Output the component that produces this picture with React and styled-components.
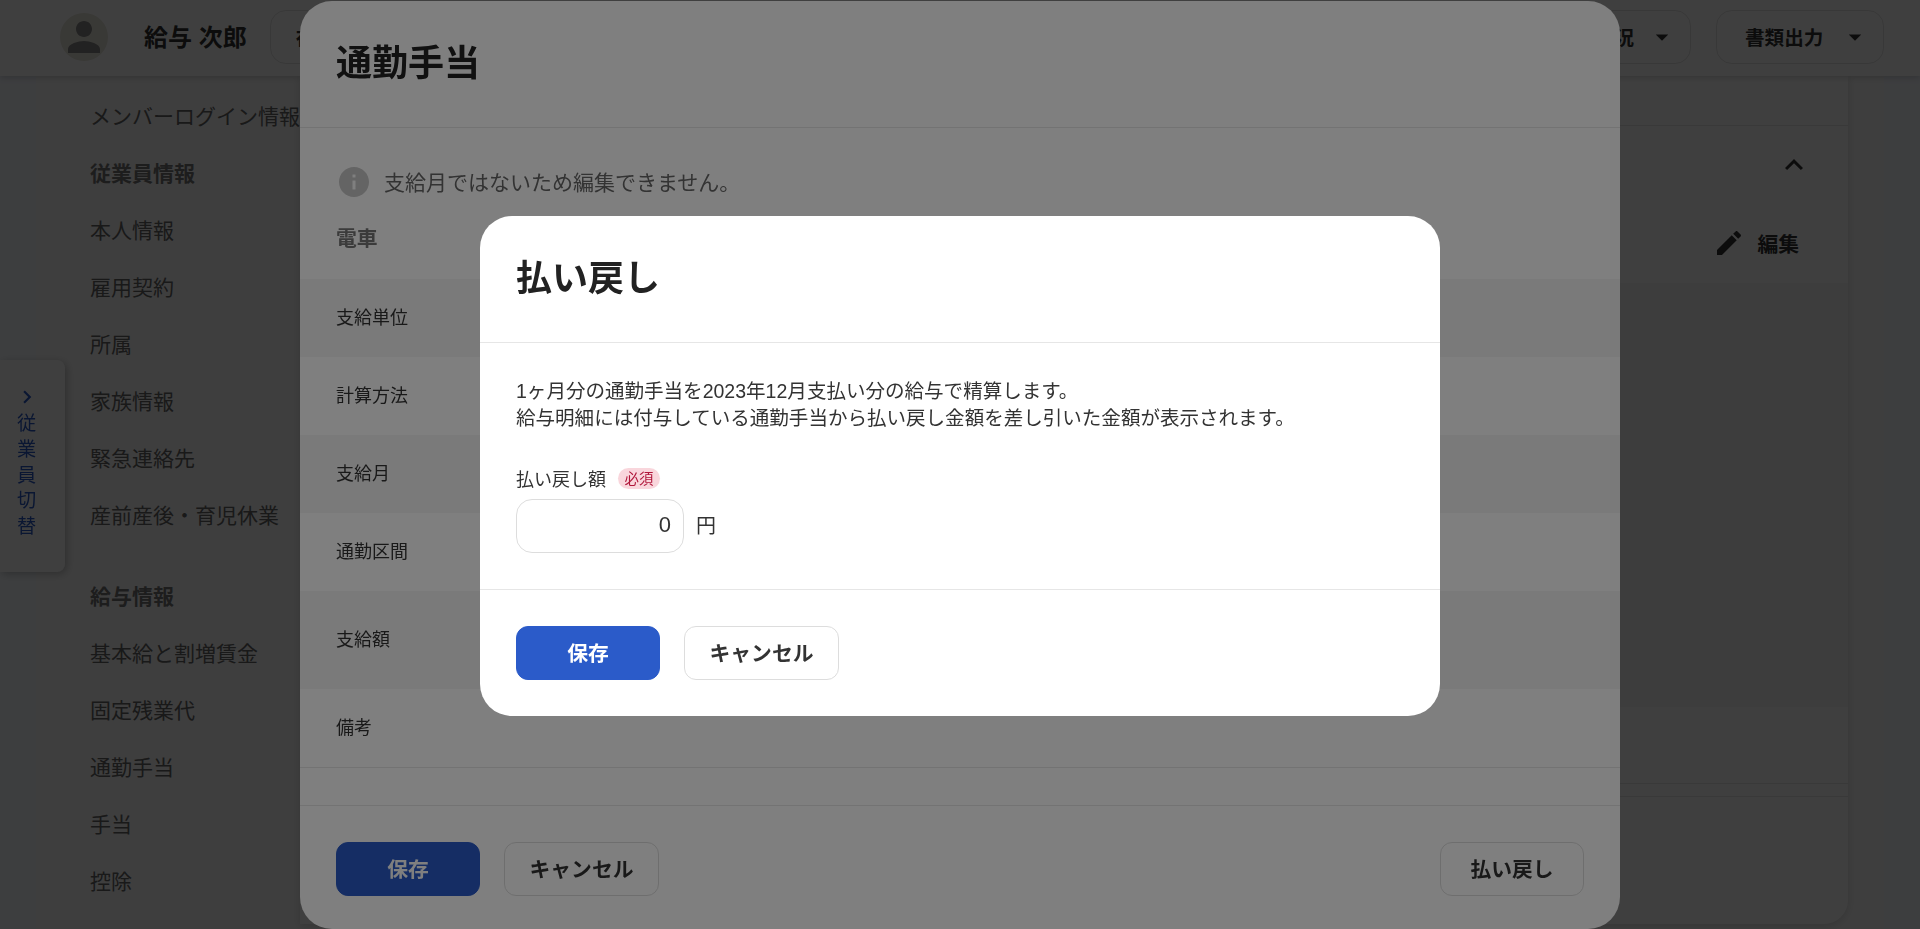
import React from 'react';
import styled, { createGlobalStyle } from 'styled-components';

const GlobalStyle = createGlobalStyle`
  html, body {
    margin: 0;
    padding: 0;
    height: 100%;
    overflow: hidden;
    background: #f5f8ff;
    color: #333;
    font-family: "Liberation Sans", "Noto Sans CJK JP", sans-serif;
  }
  * {
    box-sizing: border-box;
  }
`;

const Page = styled.div`
  height: 929px;
  display: flex;
  flex-direction: column;
  overflow: hidden;
`;

const Header = styled.header`
  height: 76px;
  flex: none;
  display: flex;
  align-items: center;
  padding: 0 36px 3px 60px;
  background: #fff;
  box-shadow: 0 2px 6px rgba(0, 0, 0, 0.16);
  position: relative;
  z-index: 2;
`;

const Avatar = styled.svg`
  width: 48px;
  height: 48px;
  flex: none;
  margin-right: 36px;
  border-radius: 50%;
  background: #e6e4da;
  fill: #888;
`;

const EmployeeName = styled.div`
  font-size: 24px;
  font-weight: 700;
  color: #333;
  margin: 0 23px 3px 0;
  white-space: nowrap;
`;

const HeaderButton = styled.button`
  height: 54px;
  display: flex;
  align-items: center;
  justify-content: ${(p) => (p.$end ? 'flex-end' : 'space-between')};
  gap: 13px;
  width: ${(p) => p.$width}px;
  padding: 0 13px 0 ${(p) => p.$pad}px;
  border: 1px solid #e2e2e2;
  border-radius: 16px;
  background: #fff;
  color: #333;
  font: inherit;
  font-size: 19.6px;
  font-weight: 700;
  white-space: nowrap;
  overflow: hidden;
`;

const HeaderSpacer = styled.div`
  flex: 1;
`;

const HeaderActions = styled.div`
  display: flex;
  gap: 25px;
`;

const Caret = styled.svg`
  width: 30px;
  height: 30px;
  flex: none;
  fill: #333;
`;

const Main = styled.main`
  flex: 1;
  min-height: 0;
  margin: 0 36px;
  display: flex;
  background: #fafafa;
`;

const SideNav = styled.nav`
  width: 264px;
  flex: none;
  padding: 10px 0 0 54px;
`;

const NavTitle = styled.div`
  height: 57px;
  display: flex;
  align-items: center;
  font-size: 21px;
  font-weight: 700;
  color: #777;
  white-space: nowrap;
  margin-top: ${(p) => (p.$spaced ? '24px' : '0')};
`;

const NavItem = styled.div`
  height: 57px;
  display: flex;
  align-items: center;
  font-size: 21px;
  color: #666;
  white-space: nowrap;
`;

const Card = styled.section`
  flex: 1;
  margin: 0 36px 5px 0;
  border-radius: 0 0 24px 0;
  background: #fff;
  box-shadow: 0 2px 8px rgba(0, 0, 0, 0.14);
  display: flex;
  flex-direction: column;
`;

const CardTabs = styled.div`
  height: 50px;
  flex: none;
  border-bottom: 1px solid #e6e6e6;
`;

const CardToolbar = styled.div`
  height: 157px;
  flex: none;
  display: flex;
  flex-direction: column;
  align-items: flex-end;
  padding: 21px 36px 0 0;
`;

const Chevron = styled.svg`
  width: 36px;
  height: 36px;
  fill: #333;
`;

const EditButton = styled.div`
  display: flex;
  align-items: center;
  gap: 12px;
  margin: 44px 13px 0 0;
  font-size: 20.8px;
  font-weight: 700;
  color: #333;
`;

const EditIcon = styled.svg`
  width: 32px;
  height: 32px;
  fill: #333;
`;

const CardTable = styled.div`
  height: 424px;
  flex: none;
  background: #f7f7f7;
`;

const CardGap = styled.div`
  height: 77px;
  flex: none;
  border-bottom: 1px solid #e6e6e6;
`;

const CardStrip = styled.div`
  height: 13px;
  flex: none;
  border-bottom: 1px solid #e6e6e6;
`;

const SideTab = styled.div`
  position: fixed;
  left: 0;
  top: 360px;
  width: 65px;
  height: 212px;
  z-index: 3;
  display: flex;
  flex-direction: column;
  align-items: center;
  padding: 24px 12px 0 0;
  background: #fff;
  border-radius: 0 8px 8px 0;
  box-shadow: 2px 2px 8px rgba(0, 0, 0, 0.25);
  color: #2b5bc9;
  font-size: 19.2px;
  line-height: 25.8px;
`;

const TabChevron = styled.svg`
  width: 26px;
  height: 26px;
  fill: #2b5bc9;
  margin-bottom: 1px;
  flex: none;
`;

const Overlay = styled.div`
  position: fixed;
  inset: 0;
  z-index: ${(p) => p.$z};
  display: flex;
  justify-content: center;
  align-items: flex-start;
  padding-top: ${(p) => p.$top}px;
  background: rgba(0, 0, 0, 0.5);
`;

const Modal = styled.div`
  width: ${(p) => p.$width}px;
  height: ${(p) => p.$height}px;
  flex: none;
  display: flex;
  flex-direction: column;
  background: #fff;
  border-radius: 32px;
  overflow: hidden;
`;

const ModalHeader = styled.div`
  height: ${(p) => p.$height}px;
  flex: none;
  display: flex;
  align-items: ${(p) => (p.$alignTop ? 'flex-start' : 'center')};
  padding: ${(p) => (p.$alignTop ? '38px 36px 0' : '0 36px')};
  border-bottom: 1px solid #e6e6e6;
`;

const ModalTitle = styled.h2`
  margin: 0;
  font-size: 36px;
  line-height: 50px;
  font-weight: 700;
  color: #222;
`;

const Notice = styled.div`
  height: 30px;
  flex: none;
  margin: 39px 36px 0;
  display: flex;
  align-items: center;
  gap: 12px;
  font-size: 21px;
  color: #666;
`;

const NoticeText = styled.span`
  margin-bottom: 2px;
`;

const NoticeIcon = styled.svg`
  width: 36px;
  height: 36px;
  flex: none;
  fill: #c8c8c8;
`;

const SectionTitle = styled.div`
  height: 82px;
  flex: none;
  display: flex;
  align-items: center;
  padding: 0 36px 2px;
  font-size: 20.8px;
  font-weight: 700;
  color: #777;
`;

const Row = styled.div`
  height: ${(p) => p.$height}px;
  flex: none;
  display: flex;
  align-items: center;
  padding: 0 36px 5px;
  background: ${(p) => (p.$shaded ? '#f5f5f5' : '#fff')};
  border-bottom: ${(p) => (p.$last ? '1px solid #e6e6e6' : '0')};
  font-size: 18px;
  color: #333;
`;

const ModalFooter = styled.div`
  display: flex;
  justify-content: space-between;
  align-items: flex-start;
  gap: 24px;
  margin-top: ${(p) => p.$gap}px;
  padding: 36px 36px 0;
  border-top: 1px solid #e6e6e6;
`;

const ButtonGroup = styled.div`
  display: flex;
  gap: 24px;
`;

const Button = styled.button`
  height: 54px;
  width: ${(p) => p.$width}px;
  padding: 0 0 2px;
  border: 1px solid ${(p) => (p.$primary ? '#2b5bc9' : '#ddd')};
  border-radius: 12px;
  background: ${(p) => (p.$primary ? '#2b5bc9' : '#fff')};
  color: ${(p) => (p.$primary ? '#fff' : '#333')};
  font: inherit;
  font-size: 20.8px;
  font-weight: 700;
  white-space: nowrap;
`;

const ModalBody = styled.div`
  padding: 35px 36px 0;
  height: 246px;
  flex: none;
`;

const Description = styled.p`
  margin: 0;
  font-size: 19.55px;
  line-height: 27px;
  color: #333;
`;

const FieldLabel = styled.div`
  margin-top: 36px;
  height: 21px;
  display: flex;
  align-items: center;
  gap: 12px;
  font-size: 18px;
  color: #333;
`;

const FieldLabelText = styled.span`
  margin-bottom: 2px;
`;

const RequiredBadge = styled.span`
  width: 42px;
  height: 21px;
  display: flex;
  align-items: center;
  justify-content: center;
  padding-bottom: 2px;
  border-radius: 11px;
  background: #f9d6dc;
  color: #b0163a;
  font-size: 14.4px;
`;

const FieldRow = styled.div`
  margin-top: 10px;
  display: flex;
  align-items: center;
  gap: 12px;
  font-size: 20px;
  color: #333;
`;

const FieldUnit = styled.span`
  margin-bottom: 3px;
`;

const AmountInput = styled.input`
  width: 168px;
  height: 54px;
  padding: 0 12px 2px 12px;
  border: 1px solid #ddd;
  border-radius: 16px;
  background: #fff;
  color: #333;
  font: inherit;
  font-size: 22px;
  text-align: right;
  outline: none;
`;

const navGroups = [
  { items: ['メンバーログイン情報'] },
  { title: '従業員情報', items: ['本人情報', '雇用契約', '所属', '家族情報', '緊急連絡先', '産前産後・育児休業'] },
  { title: '給与情報', spaced: true, items: ['基本給と割増賃金', '固定残業代', '通勤手当', '手当', '控除'] },
];

const rows = [
  { label: '支給単位', height: 78, shaded: true },
  { label: '計算方法', height: 78 },
  { label: '支給月', height: 78, shaded: true },
  { label: '通勤区間', height: 78 },
  { label: '支給額', height: 98, shaded: true },
  { label: '備考', height: 79, last: true },
];

export default function App() {
  return (
    <>
      <GlobalStyle />
      <Page>
        <Header>
          <Avatar viewBox="0 0 24 24">
            <path d="M12 12c2.21 0 4-1.79 4-4s-1.79-4-4-4-4 1.79-4 4 1.79 4 4 4zm0 2c-2.67 0-8 1.34-8 4v2h16v-2c0-2.66-5.33-4-8-4z" />
          </Avatar>
          <EmployeeName>給与 次郎</EmployeeName>
          <HeaderButton $width={200} $pad={25}>
            在籍状況
            <Caret viewBox="0 0 24 24"><path d="M7 10l5 5 5-5z" /></Caret>
          </HeaderButton>
          <HeaderSpacer />
          <HeaderActions>
            <HeaderButton $width={240} $pad={25} $end>
              給与状況
              <Caret viewBox="0 0 24 24"><path d="M7 10l5 5 5-5z" /></Caret>
            </HeaderButton>
            <HeaderButton $width={168} $pad={28}>
              書類出力
              <Caret viewBox="0 0 24 24"><path d="M7 10l5 5 5-5z" /></Caret>
            </HeaderButton>
          </HeaderActions>
        </Header>
        <Main>
          <SideNav>
            {navGroups.map((group, i) => (
              <div key={i}>
                {group.title && <NavTitle $spaced={group.spaced}>{group.title}</NavTitle>}
                {group.items.map((item) => (
                  <NavItem key={item}>{item}</NavItem>
                ))}
              </div>
            ))}
          </SideNav>
          <Card>
            <CardTabs />
            <CardToolbar>
              <Chevron viewBox="0 0 24 24"><path d="M7.41 15.41L12 10.83l4.59 4.58L18 14l-6-6-6 6z" /></Chevron>
              <EditButton>
                <EditIcon viewBox="0 0 24 24">
                  <path d="M3 17.25V21h3.75L17.81 9.94l-3.75-3.75L3 17.25zM20.71 7.04c.39-.39.39-1.02 0-1.41l-2.34-2.34c-.39-.39-1.02-.39-1.41 0l-1.83 1.83 3.75 3.75 1.83-1.83z" />
                </EditIcon>
                編集
              </EditButton>
            </CardToolbar>
            <CardTable />
            <CardGap />
            <CardStrip />
          </Card>
        </Main>
      </Page>

      <SideTab>
        <TabChevron viewBox="0 0 24 24"><path d="M8.59 16.59L13.17 12 8.59 7.41 10 6l6 6-6 6z" /></TabChevron>
        <span>従</span>
        <span>業</span>
        <span>員</span>
        <span>切</span>
        <span>替</span>
      </SideTab>

      <Overlay $z={10} $top={1}>
        <Modal $width={1320} $height={928}>
          <ModalHeader $height={127} $alignTop>
            <ModalTitle>通勤手当</ModalTitle>
          </ModalHeader>
          <Notice>
            <NoticeIcon viewBox="0 0 24 24">
              <path d="M12 2C6.48 2 2 6.48 2 12s4.48 10 10 10 10-4.48 10-10S17.52 2 12 2zm1 15h-2v-6h2v6zm0-8h-2V7h2v2z" />
            </NoticeIcon>
            <NoticeText>支給月ではないため編集できません。</NoticeText>
          </Notice>
          <SectionTitle>電車</SectionTitle>
          {rows.map((row) => (
            <Row key={row.label} $height={row.height} $shaded={row.shaded} $last={row.last}>
              {row.label}
            </Row>
          ))}
          <ModalFooter $gap={37}>
            <ButtonGroup>
              <Button $primary $width={144}>保存</Button>
              <Button $width={155}>キャンセル</Button>
            </ButtonGroup>
            <Button $width={144}>払い戻し</Button>
          </ModalFooter>
        </Modal>
      </Overlay>

      <Overlay $z={20} $top={216}>
        <Modal $width={960} $height={500}>
          <ModalHeader $height={127}>
            <ModalTitle>払い戻し</ModalTitle>
          </ModalHeader>
          <ModalBody>
            <Description>
              1ヶ月分の通勤手当を2023年12月支払い分の給与で精算します。
              <br />
              給与明細には付与している通勤手当から払い戻し金額を差し引いた金額が表示されます。
            </Description>
            <FieldLabel>
              <FieldLabelText>払い戻し額</FieldLabelText>
              <RequiredBadge>必須</RequiredBadge>
            </FieldLabel>
            <FieldRow>
              <AmountInput defaultValue="0" />
              <FieldUnit>円</FieldUnit>
            </FieldRow>
          </ModalBody>
          <ModalFooter $gap={0}>
            <ButtonGroup>
              <Button $primary $width={144}>保存</Button>
              <Button $width={155}>キャンセル</Button>
            </ButtonGroup>
          </ModalFooter>
        </Modal>
      </Overlay>
    </>
  );
}
